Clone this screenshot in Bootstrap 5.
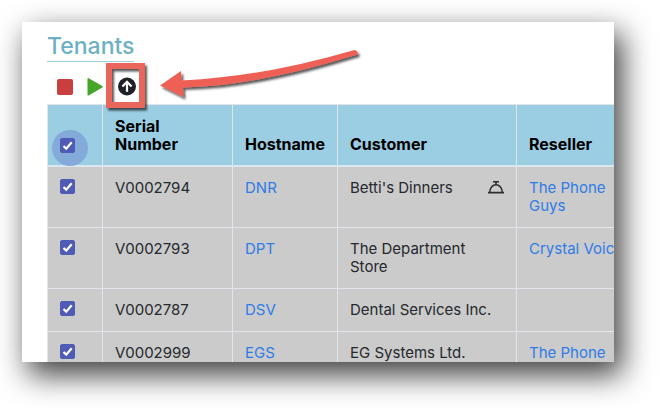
<!DOCTYPE html>
<html lang="en">
<head>
<meta charset="utf-8">
<meta name="viewport" content="width=device-width, initial-scale=1">
<title>Tenants</title>
<link href="https://cdn.jsdelivr.net/npm/bootstrap@5.3.0/dist/css/bootstrap.min.css" rel="stylesheet">
<style>
  body { font-family: Inter, "Liberation Sans", sans-serif; font-size: 15px; line-height: 18px; color: #212529; background: #fff; }
  .stage { padding: 22px 46px 46px 22px; }
  .shot { padding-left: 25px; box-shadow: 7px 12px 28px 1px rgba(0,0,0,.75); }
  .page-title { font-size: 23px; line-height: 30px; font-weight: 500; padding-top: 9px; }
  .page-title a { color: #6cb1c1; border-bottom: 1px solid #9bd0dd; }
  .tools { height: 42px; padding: 5px 0 0 8px; gap: 12px; }
  .tool { width: 19px; height: 20px; line-height: 0; }
  .tenants { width: 590px; table-layout: fixed; border-color: #e1e4ea; }
  .tenants > :not(caption) > * > * { padding: 12px; background: #cbcbcb; color: #25282c; }
  .tenants thead th { background: #9bcee3; color: #000; font-size: 16px; font-weight: 700; border-bottom: 2px solid #dce6ee; }
  .tenants a { color: #2f7ce8; }
  .c-pick { width: 55px; } .c-serial { width: 130px; } .c-host { width: 105px; } .c-cust { width: 179px; }
  .form-check-input.pick { width: 15px; height: 15px; margin: 0; border-radius: 2px; border-color: #4f5bb5; background-color: #4f5bb5; background-size: 15px; box-shadow: none; }
  .form-check-input.pick:checked { background-image: url("data:image/svg+xml,%3csvg xmlns='http://www.w3.org/2000/svg' viewBox='0 0 15 15'%3e%3cpath d='M3.500 8L6.200 10.600L11.700 4.300' fill='none' stroke='%23fff' stroke-width='2.200'/%3e%3c/svg%3e"); }
  .halo { width: 36px; height: 36px; left: -8px; top: -8px; background: #83aad9; border-radius: 50%; }
  .notes { left: 78px; top: 20px; pointer-events: none; }
</style>
<script src="https://cdn.jsdelivr.net/npm/bootstrap@5.3.0/dist/js/bootstrap.bundle.min.js"></script>
</head>
<body>
<div class="stage vh-100 overflow-hidden">
  <main class="shot h-100 position-relative overflow-hidden bg-white">
    <h1 class="page-title m-0"><a href="#" class="text-decoration-none d-inline-block">Tenants</a></h1>
    <div class="tools d-flex align-items-center">
      <button type="button" class="tool btn p-0 border-0" aria-label="Stop"><svg width="19" height="20" viewBox="0 0 19 20"><rect x="2" y="3" width="16" height="16" rx="2" fill="#c93f40"/></svg></button>
      <button type="button" class="tool btn p-0 border-0" aria-label="Start"><svg width="19" height="20" viewBox="0 0 19 20"><path d="M1.500 2.800Q1.500 1.500 2.700 2.200L16.300 10Q17.500 10.800 16.300 11.600L2.700 19.400Q1.500 20 1.500 18.800Z" fill="#44a529"/></svg></button>
      <button type="button" class="tool btn p-0 border-0" aria-label="Upgrade"><svg width="19" height="20" viewBox="0 0 19 20"><circle cx="10" cy="10.500" r="9" fill="#1d2125"/><path d="M10 15.800V6.200M5.400 10.500L10 5.800L14.600 10.500" fill="none" stroke="#fff" stroke-width="2.200"/></svg></button>
    </div>
    <table class="tenants table table-bordered align-top mb-0">
      <colgroup><col class="c-pick"><col class="c-serial"><col class="c-host"><col class="c-cust"><col></colgroup>
      <thead class="align-bottom">
        <tr>
          <th scope="col"><div class="position-relative d-flex"><span class="halo position-absolute"></span><input class="form-check-input pick position-relative" type="checkbox" checked aria-label="Select all"></div></th>
          <th scope="col">Serial Number</th><th scope="col">Hostname</th><th scope="col">Customer</th><th scope="col">Reseller</th>
        </tr>
      </thead>
      <tbody>
        <tr>
          <td><div class="d-flex"><input class="form-check-input pick" type="checkbox" checked aria-label="Select DNR"></div></td>
          <td>V0002794</td><td><a href="#" class="text-decoration-none">DNR</a></td>
          <td><div class="d-flex justify-content-between"><span>Betti's Dinners</span><svg width="16" height="18" viewBox="0 0 16 18" role="img" aria-label="Reception bell"><path d="M1.800 13.500C1.800 3.200 14.200 3.200 14.200 13.500M0 13.600H16M8 5.500V3M5 2.800H11" fill="none" stroke="#2b2e31" stroke-width="1.600"/></svg></div></td>
          <td><a href="#" class="text-decoration-none">The Phone Guys</a></td>
        </tr>
        <tr>
          <td><div class="d-flex"><input class="form-check-input pick" type="checkbox" checked aria-label="Select DPT"></div></td>
          <td>V0002793</td><td><a href="#" class="text-decoration-none">DPT</a></td><td>The Department Store</td>
          <td><a href="#" class="text-decoration-none text-nowrap">Crystal Voic</a></td>
        </tr>
        <tr>
          <td><div class="d-flex"><input class="form-check-input pick" type="checkbox" checked aria-label="Select DSV"></div></td>
          <td>V0002787</td><td><a href="#" class="text-decoration-none">DSV</a></td><td class="text-nowrap">Dental Services Inc.</td><td></td>
        </tr>
        <tr>
          <td><div class="d-flex"><input class="form-check-input pick" type="checkbox" checked aria-label="Select EGS"></div></td>
          <td>V0002999</td><td><a href="#" class="text-decoration-none">EGS</a></td><td>EG Systems Ltd.</td>
          <td><a href="#" class="text-decoration-none">The Phone</a></td>
        </tr>
      </tbody>
    </table>
    <!-- callout frame and arrow over the upgrade button -->
    <svg class="notes position-absolute" width="270" height="80" viewBox="100 42 270 80" aria-hidden="true">
      <defs><filter id="lift" x="-10%" y="-20%" width="120%" height="150%"><feDropShadow dx="2" dy="2.500" stdDeviation="1" flood-color="#000" flood-opacity=".65"/></filter></defs>
      <g filter="url(#lift)">
        <rect x="109" y="66" width="33" height="39" fill="none" stroke="#e9665c" stroke-width="6"/>
        <path d="M160 85.500L181 71L181.500 80.500C243 77.500 295 67 354.500 50Q358.500 51 357.500 54.500C300 71.500 245 86 183 87.500L183.500 97Z" fill="#ee6156"/>
      </g>
    </svg>
  </main>
</div>
</body>
</html>
